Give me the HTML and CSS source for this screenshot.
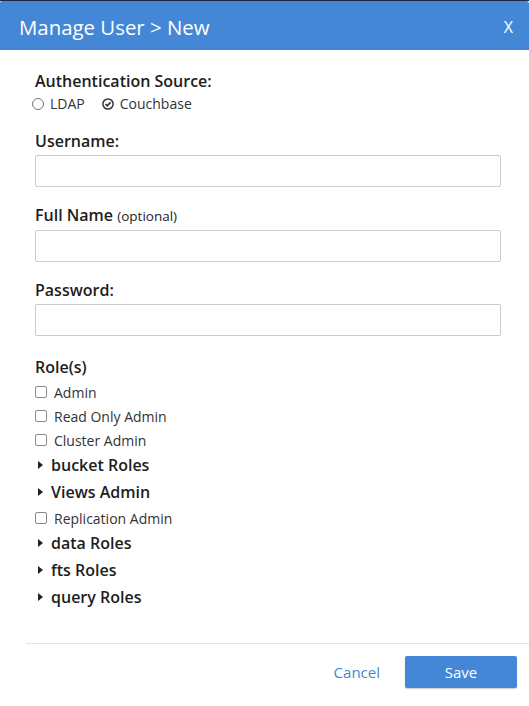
FILE: index.html
```html
<!DOCTYPE html>
<html>
<head>
<meta charset="utf-8">
<link rel="stylesheet" href="styles.css">
</head>
<body>
<div class="dialog">
  <div class="header">
    <h2 class="title">Manage User &gt; New</h2>
    <span class="close">X</span>
  </div>
  <form class="content">
    <div class="field">
      <div class="label">Authentication Source:</div>
      <div class="radios">
        <span class="radio"><span class="radio-icon"></span>LDAP</span>
        <span class="radio"><svg class="radio-check" width="12" height="12" viewBox="0 0 12 12"><circle cx="6" cy="6" r="5.1" fill="none" stroke="#333" stroke-width="1.5"/><path d="M3.5 6.1 L5.3 7.8 L8.5 4.4" fill="none" stroke="#333" stroke-width="1.6"/></svg>Couchbase</span>
      </div>
    </div>
    <div class="field">
      <div class="label">Username:</div>
      <div class="input"></div>
    </div>
    <div class="field">
      <div class="label">Full Name <span class="optional">(optional)</span></div>
      <div class="input"></div>
    </div>
    <div class="field">
      <div class="label">Password:</div>
      <div class="input"></div>
    </div>
    <div class="roles">
      <div class="label">Role(s)</div>
      <div class="check"><span class="box"></span>Admin</div>
      <div class="check"><span class="box"></span>Read Only Admin</div>
      <div class="check"><span class="box"></span>Cluster Admin</div>
      <div class="group"><span class="tri"></span>bucket Roles</div>
      <div class="group"><span class="tri"></span>Views Admin</div>
      <div class="check"><span class="box"></span>Replication Admin</div>
      <div class="group"><span class="tri"></span>data Roles</div>
      <div class="group"><span class="tri"></span>fts Roles</div>
      <div class="group"><span class="tri"></span>query Roles</div>
    </div>
  </form>
  <div class="footer">
    <span class="cancel">Cancel</span>
    <span class="save">Save</span>
  </div>
</div>
</body>
</html>
```
FILE: styles.css
```css
html, body {
  margin: 0;
  padding: 0;
  background: #fff;
}
body {
  font-family: "Open Sans", "Liberation Sans", sans-serif;
  color: #222;
}
.dialog {
  border-top: 1px solid #1d2a3a;
  width: 529px;
  height: 705px;
  box-sizing: border-box;
}
.header {
  height: 49px;
  background: #4387d6;
  display: flex;
  align-items: center;
  justify-content: space-between;
  padding: 2px 16px 0 19px;
  box-sizing: border-box;
  border-top-right-radius: 3px;
  border-top-left-radius: 2px;
}
.title {
  margin: 0;
  font-size: 20.4px;
  font-weight: 400;
  color: #fff;
  line-height: 24px;
}
.close {
  color: #fff;
  font-size: 16px;
  line-height: 20px;
}
.content {
  padding: 20px 28px 0 35px;
  height: 593px;
  box-sizing: border-box;
}
.field {
  margin-bottom: 17px;
}
.label {
  font-size: 16px;
  font-weight: 600;
  line-height: 22px;
  color: #1d1d1d;
  margin-bottom: 3px;
}
.optional {
  font-size: 13.5px;
  font-weight: 400;
}
.radios {
  display: flex;
  gap: 17px;
  margin-top: 0;
  margin-bottom: 4px;
  margin-left: -3px;
  font-size: 14px;
  line-height: 18px;
  color: #333;
}
.radio {
  display: flex;
  align-items: center;
  gap: 6px;
}
.radio-icon {
  width: 10px;
  height: 10px;
  border: 1px solid #777;
  border-radius: 50%;
}
.radio-check {
  display: block;
}
.input {
  height: 32px;
  border: 1px solid #ccc;
  border-radius: 2px;
  box-sizing: border-box;
}
.roles {
  padding-top: 3px;
}
.roles .label {
  margin-bottom: 2px;
}
.check {
  display: flex;
  align-items: center;
  gap: 7px;
  font-size: 14px;
  color: #333;
  height: 24px;
}
.box {
  width: 10px;
  height: 10px;
  border: 1px solid #888;
  border-radius: 2px;
}
.group {
  display: flex;
  align-items: center;
  gap: 8px;
  font-size: 16px;
  font-weight: 600;
  color: #1d1d1d;
  height: 24px;
  padding-top: 1px;
  padding-bottom: 2px;
  padding-left: 3px;
}
.tri {
  width: 0;
  height: 0;
  border-top: 4px solid transparent;
  border-bottom: 4px solid transparent;
  border-left: 5px solid #222;
}
.footer {
  margin-left: 26px;
  border-top: 1px solid #e3e3e3;
  display: flex;
  justify-content: flex-end;
  align-items: center;
  gap: 25px;
  padding: 12px 12px 0 0;
}
.cancel {
  color: #4387d6;
  font-size: 15px;
}
.save {
  width: 112px;
  height: 32px;
  background: #4387d6;
  color: #fff;
  font-size: 15px;
  display: flex;
  align-items: center;
  justify-content: center;
  border-radius: 2px;
  box-shadow: 0 1px 1px rgba(0,0,0,0.2);
}
```
